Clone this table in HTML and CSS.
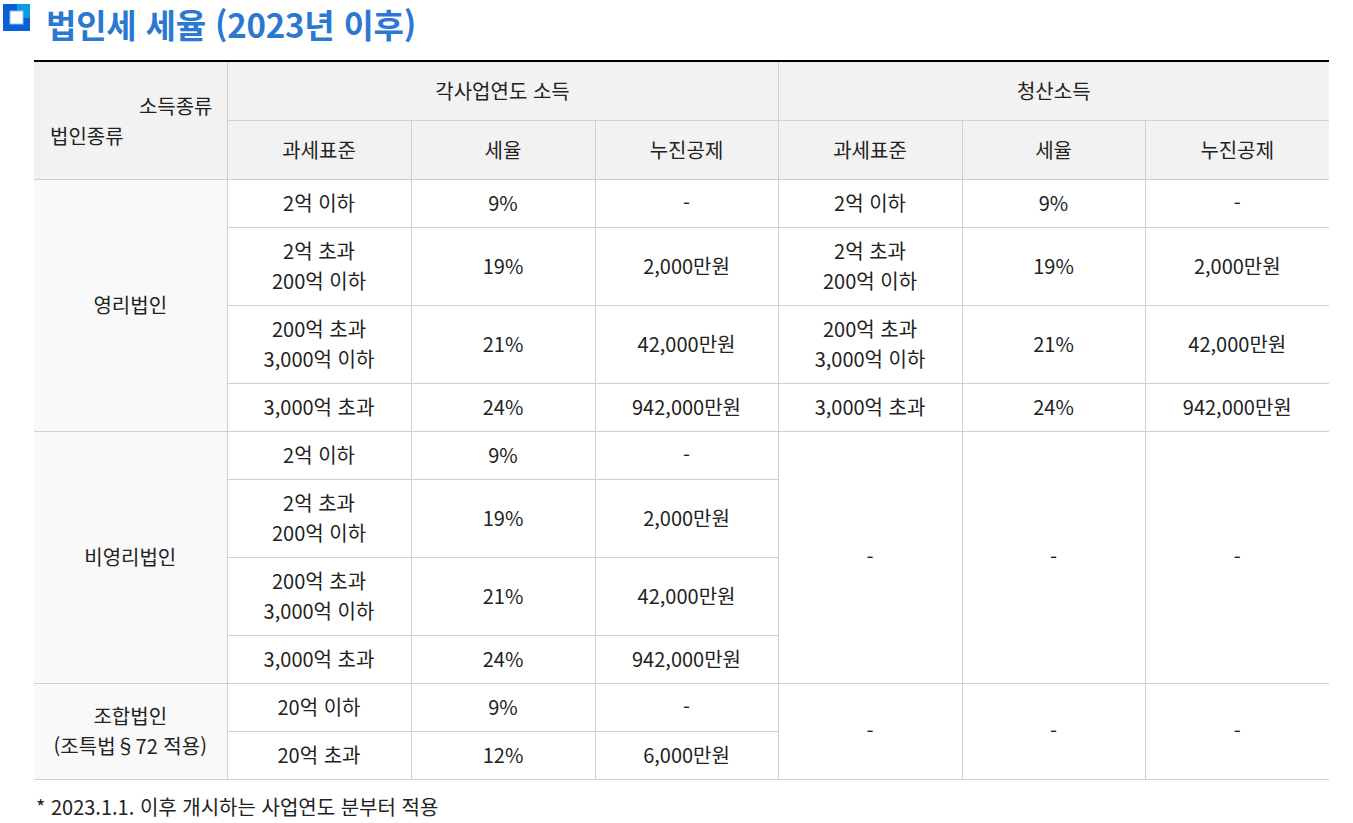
FILE: index.html
```html
<!DOCTYPE html>
<html lang="ko">
<head>
<meta charset="utf-8">
<title>법인세 세율</title>
<link rel="stylesheet" href="styles.css">
</head>
<body>
<div class="page">
  <h2 class="title">
    <span class="title-icon" aria-hidden="true">
      <svg width="27" height="27" viewBox="0 0 27 27">
        <rect x="0" y="0" width="27" height="27" fill="#0a5fd6"/>
        <rect x="14" y="0" width="13" height="14" fill="#0a9be3"/>
        <rect x="7" y="7" width="13" height="13" fill="#ffffff" stroke="#8fc0f0" stroke-width="1"/>
      </svg>
    </span>
    <span class="title-text">법인세 세율 (2023년 이후)</span>
  </h2>
  <table class="rate-table">
    <colgroup>
      <col class="c0"><col class="c1"><col class="c2"><col class="c3"><col class="c4"><col class="c5"><col class="c6">
    </colgroup>
    <thead>
      <tr class="h1">
        <th rowspan="2" class="diag">
          <div class="diag-top">소득종류</div>
          <div class="diag-bottom">법인종류</div>
        </th>
        <th colspan="3">각사업연도 소득</th>
        <th colspan="3">청산소득</th>
      </tr>
      <tr class="h2">
        <th>과세표준</th><th>세율</th><th>누진공제</th>
        <th>과세표준</th><th>세율</th><th>누진공제</th>
      </tr>
    </thead>
    <tbody>
      <tr class="r1">
        <th rowspan="4" class="kind">영리법인</th>
        <td>2억 이하</td><td>9%</td><td>-</td>
        <td>2억 이하</td><td>9%</td><td>-</td>
      </tr>
      <tr class="r2">
        <td>2억 초과<br>200억 이하</td><td>19%</td><td>2,000만원</td>
        <td>2억 초과<br>200억 이하</td><td>19%</td><td>2,000만원</td>
      </tr>
      <tr class="r2">
        <td>200억 초과<br>3,000억 이하</td><td>21%</td><td>42,000만원</td>
        <td>200억 초과<br>3,000억 이하</td><td>21%</td><td>42,000만원</td>
      </tr>
      <tr class="r1">
        <td>3,000억 초과</td><td>24%</td><td>942,000만원</td>
        <td>3,000억 초과</td><td>24%</td><td>942,000만원</td>
      </tr>
      <tr class="r1">
        <th rowspan="4" class="kind">비영리법인</th>
        <td>2억 이하</td><td>9%</td><td>-</td>
        <td rowspan="4">-</td><td rowspan="4">-</td><td rowspan="4">-</td>
      </tr>
      <tr class="r2">
        <td>2억 초과<br>200억 이하</td><td>19%</td><td>2,000만원</td>
      </tr>
      <tr class="r2">
        <td>200억 초과<br>3,000억 이하</td><td>21%</td><td>42,000만원</td>
      </tr>
      <tr class="r1">
        <td>3,000억 초과</td><td>24%</td><td>942,000만원</td>
      </tr>
      <tr class="r1">
        <th rowspan="2" class="kind">조합법인<br>(조특법§72 적용)</th>
        <td>20억 이하</td><td>9%</td><td>-</td>
        <td rowspan="2">-</td><td rowspan="2">-</td><td rowspan="2">-</td>
      </tr>
      <tr class="r1 last">
        <td>20억 초과</td><td>12%</td><td>6,000만원</td>
      </tr>
    </tbody>
  </table>
  <p class="note">* 2023.1.1. 이후 개시하는 사업연도 분부터 적용</p>
</div>
</body>
</html>
```

FILE: styles.css
```css
html, body {
  margin: 0;
  padding: 0;
  background: #ffffff;
}

body {
  font-family: "Noto Sans CJK KR", "Noto Sans", sans-serif;
  color: #222222;
}

.page {
  padding: 0 24px 0 0;
}

.title {
  display: flex;
  align-items: flex-start;
  gap: 16px;
  margin: 0;
  padding: 0 0 0 3px;
  height: 48px;
  font-size: 33px;
  font-weight: 700;
  color: #2a78d2;
  letter-spacing: -0.2px;
}

.title-icon {
  display: flex;
  width: 27px;
  height: 27px;
  margin-top: 4px;
}

.title-text {
  line-height: 48px;
}

.rate-table {
  margin: 12px 0 0 34px;
  width: 1295px;
  border-collapse: collapse;
  table-layout: fixed;
  border-top: 2px solid #000000;
  font-size: 20px;
  color: #222222;
}

.c0 { width: 193px; }
.c1, .c2, .c4, .c6 { width: 184px; }
.c3, .c5 { width: 183px; }

.rate-table th,
.rate-table td {
  border: 1px solid #d0d0d0;
  text-align: center;
  vertical-align: middle;
  padding: 0;
  font-weight: 400;
  line-height: 30px;
}

.rate-table tr > :first-child { border-left: none; }
.rate-table tr > :last-child { border-right: none; }

.rate-table thead th {
  background: #f2f2f2;
}

.h1, .h2 { height: 59px; }
.h1 th { border-top: none; }

.diag {
  text-align: left;
}

.diag-top {
  text-align: right;
  padding-right: 14px;
  margin-top: 2px;
}

.diag-bottom {
  text-align: left;
  padding-left: 16px;
  margin-top: 0;
}

.rate-table .kind {
  background: #f9f9f9;
}

.r1 { height: 48px; }
.r2 { height: 78px; }

.note {
  margin: 12px 0 0 36px;
  font-size: 20px;
  color: #222222;
  line-height: 30px;
}
```
